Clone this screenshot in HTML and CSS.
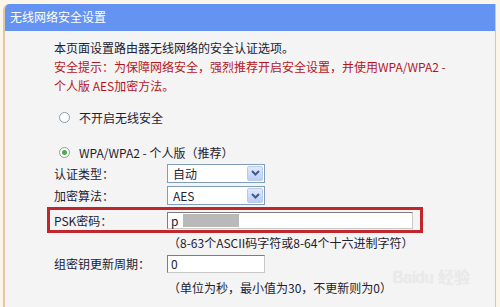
FILE: index.html
```html
<!DOCTYPE html>
<html lang="zh-CN">
<head>
    <meta charset="UTF-8">
    <title>无线网络安全设置</title>
    <link rel="stylesheet" href="styles.css">
</head>
<body>

    <div class="panel">
        <div class="panel-title">无线网络安全设置</div>

        <div class="panel-body">
            <p class="intro">本页面设置路由器无线网络的安全认证选项。<br><span class="warn">安全提示：为保障网络安全，强烈推荐开启安全设置，并使用WPA/WPA2 -<br>个人版 AES加密方法。</span></p>

            <!-- Security mode -->
            <div class="radio-row first"><span class="radio"></span>不开启无线安全</div>
            <div class="radio-row"><span class="radio checked"></span>WPA/WPA2 - 个人版（推荐）</div>

            <!-- Settings -->
            <div class="form-row row-a">
                <span class="form-label">认证类型：</span>
                <div class="select">
                    <span class="select-value">自动</span>
                    <span class="select-btn"><svg width="9" height="6" viewBox="0 0 9 6"><path d="M1 1l3.5 3.5L8 1" fill="none" stroke="#3f5a8c" stroke-width="2"/></svg></span>
                </div>
            </div>
            <div class="form-row row-b">
                <span class="form-label">加密算法：</span>
                <div class="select">
                    <span class="select-value">AES</span>
                    <span class="select-btn"><svg width="9" height="6" viewBox="0 0 9 6"><path d="M1 1l3.5 3.5L8 1" fill="none" stroke="#3f5a8c" stroke-width="2"/></svg></span>
                </div>
            </div>
            <div class="form-row psk-row">
                <span class="form-label">PSK密码：</span>
                <div class="text-input wide">p<span class="masked"></span></div>
            </div>
            <div class="hint">（8-63个ASCII码字符或8-64个十六进制字符）</div>
            <div class="form-row row-d">
                <span class="form-label">组密钥更新周期：</span>
                <div class="text-input short">0</div>
            </div>
            <div class="hint hint-last">（单位为秒，最小值为30，不更新则为0）</div>

            <div class="watermark">Baidu 经验</div>
        </div>
    </div>

</body>
</html>
```

FILE: styles.css
```css
body {
    margin: 0;
    background-color: #fcf6ea;
    font-family: "Noto Sans CJK SC", sans-serif;
    font-size: 12px;
    color: #1d2130;
}

/* Panel */
.panel {
    margin: 4px 4px 0 3px;
    height: 303px;
    border-left: 2px solid #dfc9a2;
    border-right: 1px solid #dcc7a3;
    border-top-left-radius: 6px;
    background-color: #f4f4f4;
    overflow: hidden;
}

.panel-title {
    height: 27px;
    line-height: 25px;
    padding-left: 5px;
    background-color: #6493f2;
    color: white;
    font-size: 12px;
}

.panel-body {
    position: relative;
    padding-left: 42px;
}

.intro {
    margin: 7px 0 0 7px;
    line-height: 19px;
    white-space: nowrap;
}

.warn {
    color: #b5161e;
}

/* Radio buttons */
.radio-row {
    display: flex;
    align-items: center;
    height: 20px;
    margin-top: 15px;
    padding-left: 12px;
}

.radio-row.first {
    margin-top: 12px;
}

.radio {
    width: 9px;
    height: 9px;
    margin-right: 9px;
    border: 1px solid #8e9aa8;
    border-radius: 50%;
    background: white;
    display: flex;
    align-items: center;
    justify-content: center;
}

.radio.checked::after {
    content: "";
    width: 5px;
    height: 5px;
    border-radius: 50%;
    background: #4caa4c;
}

/* Form rows */
.form-row {
    display: flex;
    align-items: center;
    padding-left: 7px;
    height: 23px;
}

.row-a {
    height: 22px;
}

.form-label {
    width: 113px;
    flex-shrink: 0;
}

.psk-row {
    box-sizing: border-box;
    width: 376px;
    height: 26px;
    padding-left: 4px;
    border: 3px solid #c0272d;
}

.select {
    box-sizing: border-box;
    width: 98px;
    height: 19px;
    display: flex;
    align-items: center;
    justify-content: space-between;
    border: 1px solid #7f9db9;
    background: white;
    padding: 0 1px 0 5px;
}

.select-btn {
    box-sizing: border-box;
    width: 16px;
    height: 15px;
    display: flex;
    align-items: center;
    justify-content: center;
    border: 1px solid #b8c9ee;
    border-radius: 2px;
    background: linear-gradient(#e0e9fc, #bccef6);
}

.text-input {
    box-sizing: border-box;
    height: 17px;
    display: flex;
    align-items: center;
    padding-left: 3px;
    border: 1px solid #7d7d7d;
    border-bottom-color: #c8c8c8;
    border-right-color: #c8c8c8;
    background: white;
}

.text-input.wide {
    width: 246px;
}

.text-input.short {
    width: 98px;
    height: 18px;
}

.masked {
    display: inline-block;
    width: 56px;
    height: 13px;
    margin-left: 5px;
    background: #b9b9b9;
}

.hint {
    height: 19px;
    line-height: 19px;
    padding-left: 121px;
}

.hint-last {
    margin-top: 3px;
}

/* Baidu watermark */
.watermark {
    position: absolute;
    right: 25px;
    top: 226px;
    font-family: "Liberation Sans", sans-serif;
    font-size: 16px;
    color: #ececec;
    text-shadow: 0 0 1px #d6d6d6;
}
```
